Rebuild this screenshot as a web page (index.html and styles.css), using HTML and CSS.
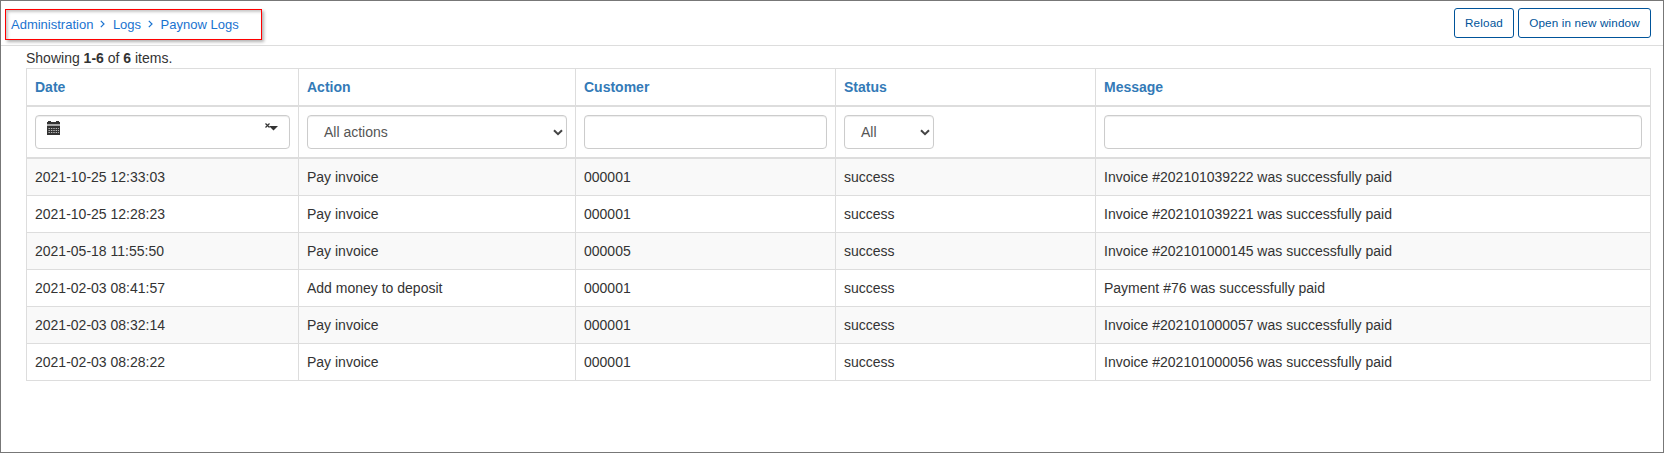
FILE: index.html
```html
<!DOCTYPE html>
<html lang="en">
<head>
<meta charset="utf-8">
<title>Paynow Logs</title>
<link rel="stylesheet" href="styles.css">
</head>
<body>
<div class="page">
  <header class="topbar">
    <nav class="breadcrumb">
      <a>Administration</a>
      <svg class="chevron" width="5" height="8" viewBox="0 0 5 8"><path d="M0.8 0.8 4 4 0.8 7.2"/></svg>
      <a>Logs</a>
      <svg class="chevron" width="5" height="8" viewBox="0 0 5 8"><path d="M0.8 0.8 4 4 0.8 7.2"/></svg>
      <a>Paynow Logs</a>
    </nav>
    <div class="actions">
      <button class="btn">Reload</button>
      <button class="btn">Open in new window</button>
    </div>
  </header>
  <main class="content">
    <div class="summary">Showing <b>1-6</b> of <b>6</b> items.</div>
    <table class="grid">
      <colgroup><col class="c-date"><col class="c-action"><col class="c-customer"><col class="c-status"><col class="c-message"></colgroup>
      <thead>
        <tr><th>Date</th><th>Action</th><th>Customer</th><th>Status</th><th>Message</th></tr>
        <tr class="filters">
          <td><div class="control date-range">
            <svg class="calendar" width="13" height="14" viewBox="0 0 13 14">
              <path fill="#333" d="M0 1h1V0h3v1h5V0h3v1h1v2H0z"/>
              <path fill="#aaa" d="M0 3h13v2H0z"/>
              <path fill="#333" d="M0 5h13v9H0z"/>
              <path stroke="#bbb" stroke-width="1" stroke-dasharray="1.400 1" d="M1.500 7.500h10.500M1.500 9.500h10.500M1.500 11.500h10.500"/>
            </svg>
            <svg class="clear-caret" width="13" height="8" viewBox="0 0 13 8"><path fill="none" stroke="#333" stroke-width="1.200" d="M0.500 0.500l4 4M4.500 0.500L0.500 4.500"/><path fill="#333" d="M4 3h9L8.500 7.500z"/></svg>
          </div></td>
          <td><div class="control select"><span>All actions</span><svg width="10" height="7" viewBox="0 0 10 7"><path d="M1 1.200 5 5.200 9 1.200"/></svg></div></td>
          <td><div class="control"></div></td>
          <td><div class="control select select-short"><span>All</span><svg width="10" height="7" viewBox="0 0 10 7"><path d="M1 1.200 5 5.200 9 1.200"/></svg></div></td>
          <td><div class="control"></div></td>
        </tr>
      </thead>
      <tbody>
        <tr><td>2021-10-25 12:33:03</td><td>Pay invoice</td><td>000001</td><td>success</td><td>Invoice #202101039222 was successfully paid</td></tr>
        <tr><td>2021-10-25 12:28:23</td><td>Pay invoice</td><td>000001</td><td>success</td><td>Invoice #202101039221 was successfully paid</td></tr>
        <tr><td>2021-05-18 11:55:50</td><td>Pay invoice</td><td>000005</td><td>success</td><td>Invoice #202101000145 was successfully paid</td></tr>
        <tr><td>2021-02-03 08:41:57</td><td>Add money to deposit</td><td>000001</td><td>success</td><td>Payment #76 was successfully paid</td></tr>
        <tr><td>2021-02-03 08:32:14</td><td>Pay invoice</td><td>000001</td><td>success</td><td>Invoice #202101000057 was successfully paid</td></tr>
        <tr><td>2021-02-03 08:28:22</td><td>Pay invoice</td><td>000001</td><td>success</td><td>Invoice #202101000056 was successfully paid</td></tr>
      </tbody>
    </table>
  </main>
</div>
</body>
</html>
```

FILE: styles.css
```css
* { box-sizing: border-box; }
body {
  margin: 0;
  font: 14px/20px "Liberation Sans", Arial, sans-serif;
  color: #333;
  background: #fff;
}
.page {
  height: 453px;
  border: 1px solid #777;
  overflow: hidden;
}
.topbar {
  display: flex;
  justify-content: space-between;
  align-items: flex-start;
  height: 45px;
  padding: 7px 12px 0 4px;
  border-bottom: 1px solid #ddd;
}
.breadcrumb {
  display: flex;
  align-items: center;
  width: 257px;
  height: 31px;
  margin-top: 1px;
  padding: 1px 0 0 5px;
  border: 1px solid #f00;
  box-shadow: 2px 2px 3px rgba(0, 0, 0, .3), inset 2px 2px 3px rgba(0, 0, 0, .22);
  font-size: 13px;
  color: #1a73d0;
}
.chevron {
  margin: 0 7.5px 3px 7px;
  fill: none;
  stroke: #1a73d0;
  stroke-width: 1.2;
}
.actions { display: flex; gap: 4px; }
.btn {
  height: 30px;
  padding: 0 10px 1px;
  border: 1px solid #00549a;
  border-radius: 3px;
  background: #fff;
  color: #00549a;
  font: 11.7px "Liberation Sans", Arial, sans-serif;
  letter-spacing: .15px;
  white-space: nowrap;
}
.btn:first-child { width: 60px; }
.btn:last-child { width: 133px; }
.content { padding: 2px 12px 0 25px; }
.summary { height: 20px; }
.grid {
  width: 1625px;
  table-layout: fixed;
  border-collapse: separate;
  border-spacing: 0;
  border: solid #ddd;
  border-width: 1px 0 0 1px;
}
.c-date { width: 272px; }
.c-action { width: 277px; }
.c-customer, .c-status { width: 260px; }
.c-message { width: 555px; }
.grid th, .grid td {
  padding: 8px;
  border: solid #ddd;
  border-width: 0 1px 1px 0;
  text-align: left;
}
.grid thead th, .grid thead td { border-bottom-width: 2px; }
.grid th { color: #337ab7; }
.grid tbody tr:nth-child(odd) { background: #f9f9f9; }
.control {
  display: flex;
  height: 34px;
  border: 1px solid #ccc;
  border-radius: 4px;
  background: #fff;
  box-shadow: inset 0 1px 1px rgba(0, 0, 0, .075);
}
.date-range {
  justify-content: space-between;
  align-items: flex-start;
  padding: 5px 11px 0;
}
.clear-caret { margin-top: 2px; }
.select {
  justify-content: space-between;
  align-items: center;
  padding: 0 3px 0 16px;
  color: #555;
}
.select svg { fill: none; stroke: #444; stroke-width: 2; }
.select-short { width: 90px; }
```
